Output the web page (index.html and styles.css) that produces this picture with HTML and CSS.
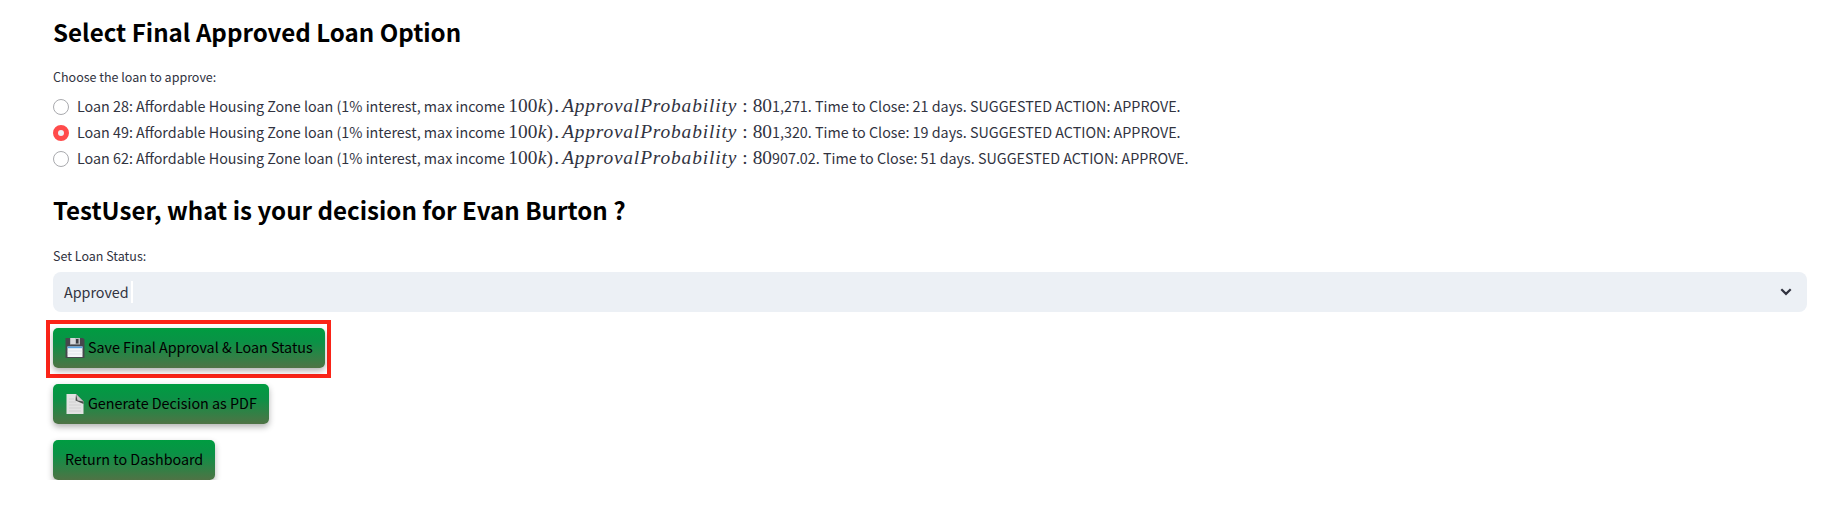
FILE: index.html
```html
<!DOCTYPE html>
<html lang="en">
<head>
<meta charset="utf-8">
<title>Loan decision</title>
<link rel="stylesheet" href="styles.css">
</head>
<body>
<main class="page">
  <h2 class="heading">Select Final Approved Loan Option</h2>
  <div class="label">Choose the loan to approve:</div>
  <div class="radios">
    <label class="radio"><span class="dot"></span><span class="text">Loan 28: Affordable Housing Zone loan (1% interest, max income <span class="math"><span class="m-num">100<i>k</i>)</span><span class="m-dot">.</span><i class="m-approval">Approval</i><i class="m-prob">Probability</i><span class="m-colon">:</span><span>80</span></span>1,271. Time to Close: 21 days. SUGGESTED ACTION: APPROVE.</span></label>
    <label class="radio"><span class="dot checked"></span><span class="text">Loan 49: Affordable Housing Zone loan (1% interest, max income <span class="math"><span class="m-num">100<i>k</i>)</span><span class="m-dot">.</span><i class="m-approval">Approval</i><i class="m-prob">Probability</i><span class="m-colon">:</span><span>80</span></span>1,320. Time to Close: 19 days. SUGGESTED ACTION: APPROVE.</span></label>
    <label class="radio"><span class="dot"></span><span class="text">Loan 62: Affordable Housing Zone loan (1% interest, max income <span class="math"><span class="m-num">100<i>k</i>)</span><span class="m-dot">.</span><i class="m-approval">Approval</i><i class="m-prob">Probability</i><span class="m-colon">:</span><span>80</span></span>907.02. Time to Close: 51 days. SUGGESTED ACTION: APPROVE.</span></label>
  </div>
  <h2 class="heading second">TestUser, what is your decision for Evan Burton ?</h2>
  <div class="label status">Set Loan Status:</div>
  <div class="select">
    <span class="value">Approved</span><span class="caret"></span>
    <svg class="chevron" width="12" height="8" viewBox="0 0 12 8"><path d="M1.300 1.300 6 5.900l4.700-4.600" fill="none" stroke="#31333f" stroke-width="2.200"/></svg>
  </div>
  <div class="actions">
    <div class="highlight">
      <button class="btn">
        <svg class="icon" width="20" height="20" viewBox="0 0 20 20">
          <path d="M1 0h17l1.500 1.500V20H.5V.5z" fill="#46484d"/>
          <path d="M5 0h10v6.500H5z" fill="#b9bbbf"/>
          <path d="M6 0h4v6H6z" fill="#d8d9dc"/>
          <path d="M11 1h2.500v4.500H11z" fill="#3b3c40"/>
          <path d="M2.500 8.500h15V19h-15z" fill="#f3f5f8"/>
          <path d="M2.500 8.500h15v1.700h-15z" fill="#5aa3e0"/>
          <path d="M2.500 13h15M2.500 16h15" stroke="#d5d9df" stroke-width=".6"/>
        </svg>
        <span class="caption">Save Final Approval &amp; Loan Status</span>
      </button>
    </div>
    <button class="btn">
      <svg class="icon" width="20" height="20" viewBox="0 0 20 20">
        <path d="M1.500 0H11l7.500 7.500V20h-17z" fill="#e2e2e2"/>
        <path d="M11 0l7.500 7.500V10L10.500 6.500z" fill="#4a4d4a"/>
        <path d="M11 0l7.500 7.500-6-1z" fill="#c6c6c6"/>
        <path d="M4 5h5M4 8h7M4 11h12M4 14h12M4 17h12" stroke="#c9c9c9" stroke-width=".7"/>
      </svg>
      <span class="caption">Generate Decision as PDF</span>
    </button>
    <button class="btn"><span class="caption">Return to Dashboard</span></button>
  </div>
</main>
</body>
</html>
```
FILE: styles.css
```css
* { box-sizing: border-box; }
body {
  margin: 0;
  background: #fff;
  color: #31333f;
  font-family: "Noto Sans CJK SC", "Noto Sans", sans-serif;
  font-size: 14.32px;
}
.page { padding: 16px 28px 0 53px; }
.heading {
  margin: 0;
  color: #000;
  font-size: 24.12px;
  font-weight: 600;
  line-height: 32px;
}
.label { margin-top: 19px; font-size: 12.5px; line-height: 20px; }
.radios { margin-top: 7px; }
.radio { display: flex; align-items: center; gap: 8px; height: 26px; line-height: 26px; }
.text { padding-bottom: 2px; white-space: nowrap; }
.dot {
  width: 16px;
  height: 16px;
  border: 1px solid #a9aaae;
  border-radius: 50%;
  background: #fff;
}
.dot.checked { border: 5px solid #ff4b4b; background: #f0f2f6; }
.math { font: 19.4px/1 "Liberation Serif", serif; line-height: 0; }
.math > * { display: inline-block; line-height: 0; }
.m-num { width: 46px; letter-spacing: .15px; }
.m-dot { width: 8px; }
.m-approval { width: 78px; letter-spacing: .8px; }
.m-prob { width: 102px; letter-spacing: .85px; }
.m-colon { width: 10.500px; }
.second { margin-top: 22px; }
.status { margin-top: 20px; }
.select {
  display: flex;
  align-items: center;
  height: 40px;
  margin-top: 6px;
  padding: 0 15px 0 11px;
  border-radius: 8px;
  background: #ecf0f5;
}
.value { padding-bottom: 2px; }
.caret { width: 2px; height: 22px; margin-left: 2px; background: #fff; }
.chevron { margin-left: auto; }
.actions { display: flex; flex-direction: column; align-items: flex-start; gap: 16px; margin-top: 16px; }
.highlight { margin: -8px -7px -10px; padding: 4px 2px 6px 3px; border: 4px solid #fb2418; }
.btn {
  display: flex;
  align-items: center;
  gap: 3px;
  height: 40px;
  padding: 0 12px;
  border: 0;
  border-radius: 5px;
  background: linear-gradient(#009c41 0%, #0a9246 35%, #4f7345 100%);
  box-shadow: 0 3px 6px rgba(0, 0, 0, .3);
  color: #000;
  font: inherit;
  white-space: nowrap;
}
.caption { padding-bottom: 4px; }
```
